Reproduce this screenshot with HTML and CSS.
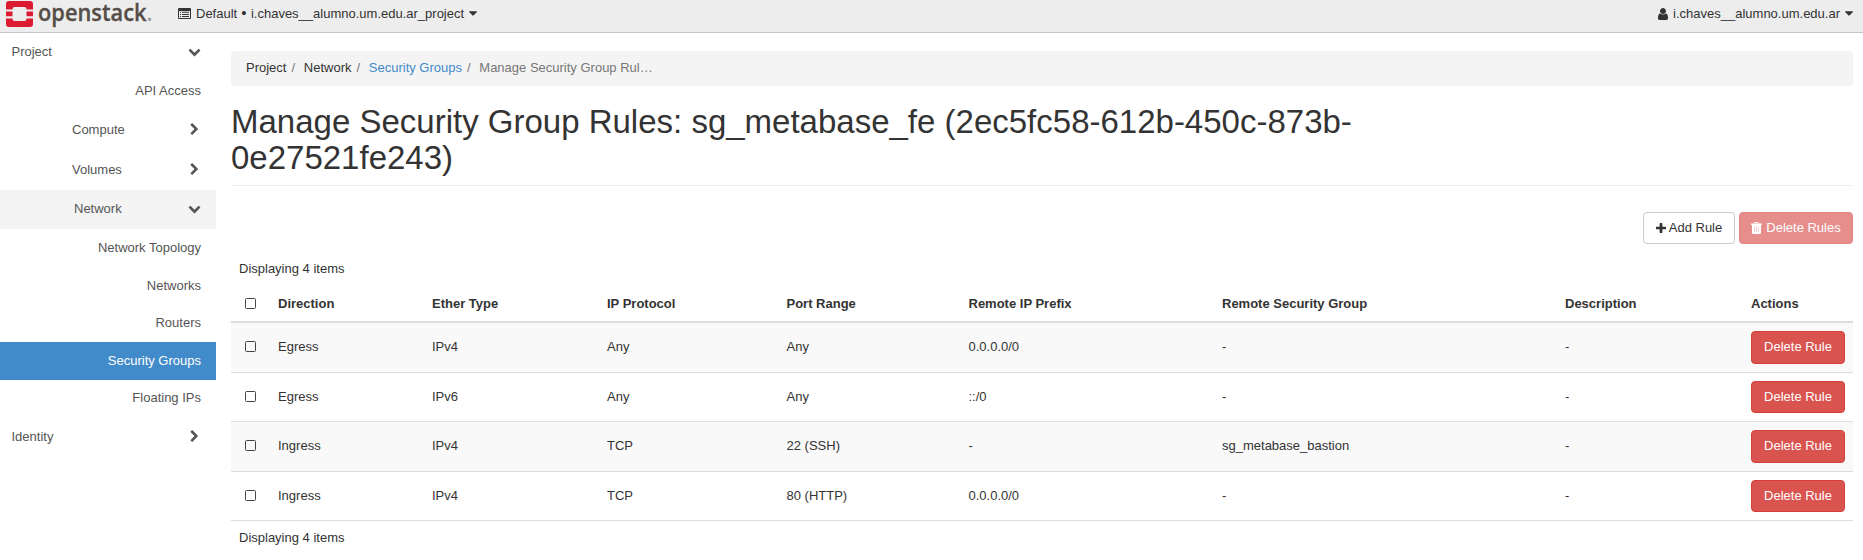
FILE: index.html
```html
<!DOCTYPE html>
<html lang="en">
<head>
<meta charset="utf-8">
<title>Manage Security Group Rules</title>
<link rel="stylesheet" href="styles.css">
</head>
<body>
<svg class="sprite" aria-hidden="true">
  <symbol id="down" viewBox="0 0 1792 1792"><path d="M1683 808l-742 741q-19 19-45 19t-45-19l-742-741q-19-19-19-45.500t19-45.500l166-165q19-19 45-19t45 19l531 531 531-531q19-19 45-19t45 19l166 165q19 19 19 45.500t-19 45.500z"/></symbol>
  <symbol id="right" viewBox="0 0 1792 1792"><path d="M1363 877l-742 742q-19 19-45 19t-45-19l-166-166q-19-19-19-45t19-45l531-531-531-531q-19-19-19-45t19-45l166-166q19-19 45-19t45 19l742 742q19 19 19 45t-19 45z"/></symbol>
  <symbol id="caret" viewBox="384 640 1024 576"><path d="M1408 704q0 26-19 45l-448 448q-19 19-45 19t-45-19l-448-448q-19-19-19-45t19-45 45-19h896q26 0 45 19t19 45z"/></symbol>
  <symbol id="plus" viewBox="192 128 1408 1408"><path d="M1600 736v192q0 40-28 68t-68 28h-416v416q0 40-28 68t-68 28h-192q-40 0-68-28t-28-68v-416h-416q-40 0-68-28t-28-68v-192q0-40 28-68t68-28h416v-416q0-40 28-68t68-28h192q40 0 68 28t28 68v416h416q40 0 68 28t28 68z"/></symbol>
  <symbol id="user" viewBox="256 128 1280 1536"><path d="M1536 1399q0 109-62.500 187t-150.500 78h-854q-88 0-150.500-78t-62.500-187q0-85 8.500-160.500t31.500-152 58.500-131 94-89 134.500-34.500q131 128 313 128t313-128q76 0 134.500 34.500t94 89 58.500 131 31.500 152 8.500 160.500zm-256-887q0 159-112.500 271.500t-271.500 112.500-271.500-112.500-112.500-271.500 112.500-271.500 271.500-112.500 271.500 112.500 112.500 271.500z"/></symbol>
  <symbol id="trash" viewBox="0 0 11 12"><path fill-rule="evenodd" d="M4 0h3l1 1.500h3V3h-1v7.500q0 1.500-1.500 1.500h-6Q1 12 1 10.500V3H0V1.500h3zM4.200 1l-.4.500h3.400L6.800 1z"/><path class="slats" d="M3 4.500h1v5.500H3zM5 4.500h1v5.500H5zM7 4.500h1v5.500H7z"/></symbol>
  <symbol id="list" viewBox="0 0 13 11"><path fill-rule="evenodd" d="M1 0h11q1 0 1 1v9q0 1-1 1H1q-1 0-1-1V1q0-1 1-1zM1 3v7h11V3zM2 3.800h1v1H2zM4 3.800h7v1H4zM2 5.900h1v1H2zM4 5.900h7v1H4zM2 8h1v1H2zM4 8h7v1H4z"/></symbol>
</svg>

<header class="navbar">
  <a class="brand">
    <svg class="logo" viewBox="0 0 156 30">
      <path fill="#dc1a32" d="M9 1h21q3 0 3 3v5.500h-6.500V9q0-2-2-2h-10q-2 0-2 2v.5H6V4q0-3 3-3zM6 11.600h6.500v4.700H6zM26.500 11.600H33v4.700h-6.500zM6 18.400h6.500v.6q0 2 2 2h10q2 0 2-2v-.6H33V24q0 3-3 3H9q-3 0-3-3z"/>
      <text class="wordmark" x="38" y="20.500" textLength="114.500" lengthAdjust="spacingAndGlyphs">openstack<tspan class="dot">.</tspan></text>
    </svg>
  </a>
  <div class="context"><svg class="i-list"><use href="#list"/></svg><span>Default <b class="bullet">•</b> i.chaves__alumno.um.edu.ar_project</span><svg class="i-caret"><use href="#caret"/></svg></div>
  <div class="account"><svg class="i-user"><use href="#user"/></svg><span>i.chaves__alumno.um.edu.ar</span><svg class="i-caret"><use href="#caret"/></svg></div>
</header>

<div class="page">
  <nav class="sidebar">
    <a class="item top"><span>Project</span><svg class="chev"><use href="#down"/></svg></a>
    <a class="item leaf">API Access</a>
    <a class="item group"><span>Compute</span><svg class="chev"><use href="#right"/></svg></a>
    <a class="item group"><span>Volumes</span><svg class="chev"><use href="#right"/></svg></a>
    <a class="item group open"><span>Network</span><svg class="chev"><use href="#down"/></svg></a>
    <a class="item leaf">Network Topology</a>
    <a class="item leaf">Networks</a>
    <a class="item leaf short">Routers</a>
    <a class="item leaf active">Security Groups</a>
    <a class="item leaf short">Floating IPs</a>
    <a class="item top last"><span>Identity</span><svg class="chev"><use href="#right"/></svg></a>
  </nav>

  <main class="content">
    <div class="breadcrumb"><span>Project</span><i>/</i><span>Network</span><i>/</i><a>Security Groups</a><i>/</i><em>Manage Security Group Rul…</em></div>
    <h1>Manage Security Group Rules: sg_metabase_fe (2ec5fc58-612b-450c-873b-<br>0e27521fe243)</h1>
    <div class="actions">
      <button class="btn add"><svg class="i-plus"><use href="#plus"/></svg>Add Rule</button>
      <button class="btn danger disabled"><svg class="i-trash"><use href="#trash"/></svg>Delete Rules</button>
    </div>
    <div class="count">Displaying 4 items</div>
    <div class="table">
      <div class="row head"><span><b class="check"></b></span><span>Direction</span><span>Ether Type</span><span>IP Protocol</span><span>Port Range</span><span>Remote IP Prefix</span><span>Remote Security Group</span><span>Description</span><span>Actions</span></div>
      <div class="row"><span><b class="check"></b></span><span>Egress</span><span>IPv4</span><span>Any</span><span>Any</span><span>0.0.0.0/0</span><span>-</span><span>-</span><button class="btn danger">Delete Rule</button></div>
      <div class="row"><span><b class="check"></b></span><span>Egress</span><span>IPv6</span><span>Any</span><span>Any</span><span>::/0</span><span>-</span><span>-</span><button class="btn danger">Delete Rule</button></div>
      <div class="row"><span><b class="check"></b></span><span>Ingress</span><span>IPv4</span><span>TCP</span><span>22 (SSH)</span><span>-</span><span>sg_metabase_bastion</span><span>-</span><button class="btn danger">Delete Rule</button></div>
      <div class="row"><span><b class="check"></b></span><span>Ingress</span><span>IPv4</span><span>TCP</span><span>80 (HTTP)</span><span>0.0.0.0/0</span><span>-</span><span>-</span><button class="btn danger">Delete Rule</button></div>
    </div>
    <div class="count foot">Displaying 4 items</div>
  </main>
</div>
</body>
</html>
```
FILE: styles.css
```css
* { box-sizing: border-box; }
html, body { margin: 0; height: 560px; overflow: hidden; }
body { font: 13px/19px "Liberation Sans", Arial, sans-serif; color: #333; background: #fff; }
svg { fill: currentColor; flex: none; display: block; }
.sprite { display: none; }

.navbar { height: 33px; display: flex; background: #ededed; border-bottom: 1px solid #c4c4c4; }
.brand { width: 178px; }
.logo { width: 156px; height: 30px; overflow: visible; }
.wordmark { font: 600 24px "Open Sans", sans-serif; fill: #554d47; stroke: #554d47; stroke-width: .3px; }
.dot { fill: #999; stroke: none; }
.context, .account { display: flex; align-items: center; height: 27px; }
.account { margin-left: auto; padding-right: 10px; }
.bullet { display: inline-block; width: 6.500px; text-align: center; font-size: 15px; line-height: 15px; font-weight: 400; text-indent: -.500px; }
.i-list { width: 13px; height: 11px; margin-right: 5px; }
.i-user { width: 10px; height: 12px; margin-right: 5px; }
.i-caret { width: 8px; height: 5px; margin-left: 5px; }

.page { display: flex; }
.sidebar { width: 216px; color: #555; }
.item { display: flex; align-items: center; height: 38px; padding: 0 15px 2px 12px; }
.top { justify-content: space-between; height: 39px; padding-left: 11.500px; }
.leaf { justify-content: flex-end; }
.short { height: 37px; }
.group { height: 40px; padding-left: 72px; justify-content: space-between; }
.open { height: 39px; padding-left: 74px; background: #f4f4f4; }
.last { height: 40px; }
.active { background: #428bca; color: #fff; }
.chev { width: 13px; height: 13px; }

.content { flex: 1; padding: 18px 10px 0 15px; }
.breadcrumb { height: 35px; display: flex; align-items: center; padding: 0 15px 2px; background: #f4f4f4; border-radius: 4px; }
.breadcrumb i { font-style: normal; color: #777; padding: 0 8.700px 0 5px; }
.breadcrumb a { color: #428bca; }
.breadcrumb em { font-style: normal; color: #777; }
h1 { margin: 18px 0 0; height: 82px; border-bottom: 1px solid #eee; font-size: 33px; line-height: 36px; font-weight: 400; white-space: nowrap; }
.actions { display: flex; justify-content: flex-end; gap: 4px; margin-top: 26px; }
.btn { display: flex; align-items: center; justify-content: center; gap: 3px; height: 32px; padding: 0 0 1px; border: 1px solid #ccc; border-radius: 4px; background: #fff; color: #333; font: inherit; white-space: nowrap; }
.add { width: 92px; }
.danger { width: 94px; background: #d9534f; border-color: #d43f3a; color: #fff; }
.disabled { width: 114px; gap: 4px; opacity: .65; }
.i-plus { width: 10px; height: 10px; }
.i-trash { width: 11px; height: 12px; }
.slats { fill: #d9534f; opacity: .4; }
.count { margin-top: 15px; padding-left: 8px; height: 20px; }
.row { display: grid; grid-template-columns: 39px 154px 175px 179.500px 182px 253.500px 343px 186px 94px; padding: 8px 0 0 8px; height: 49px; border-bottom: 1px solid #ddd; }
.row > span { align-self: start; padding-top: 6px; }
.row:nth-child(even) { height: 50px; background: #f9f9f9; }
.row:nth-child(even) .btn { height: 33px; padding-bottom: 2px; }
.head { height: 44px; padding-top: 9px; border-bottom: 2px solid #ddd; font-weight: 700; }
.check { display: block; width: 11px; height: 11px; margin: 4px 0 0 6px; border: 1px solid #444; border-radius: 1.500px; }
.foot { margin-top: 7px; }
```
